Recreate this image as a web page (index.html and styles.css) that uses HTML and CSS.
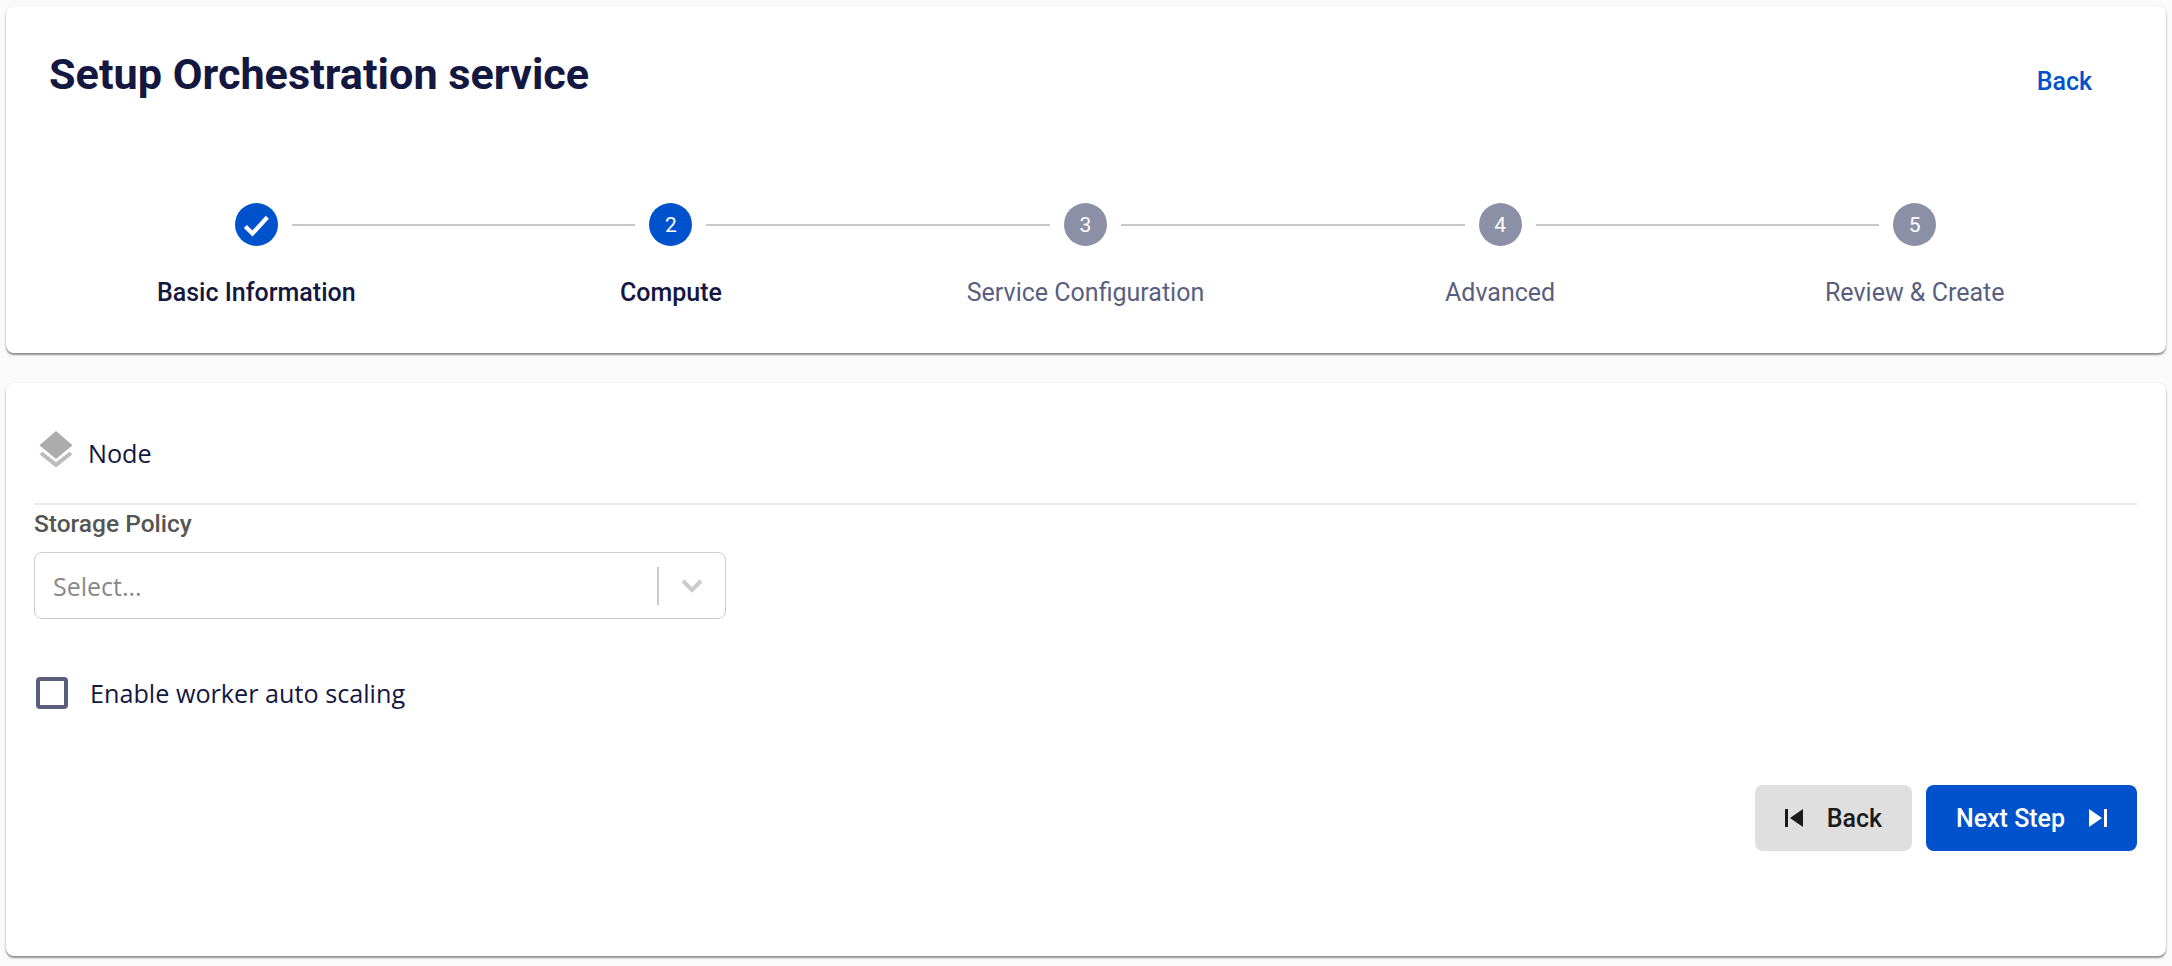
FILE: index.html
```html
<!DOCTYPE html>
<html lang="en">
<head>
<meta charset="utf-8">
<title>Setup Orchestration service</title>
<link rel="stylesheet" href="styles.css">
</head>
<body>
<main class="page">
  <section class="card header-card">
    <div class="header-row">
      <h1 class="title">Setup Orchestration service</h1>
      <a class="back-link" href="#">Back</a>
    </div>
    <ol class="stepper">
      <li class="step done">
        <div class="step-track">
          <span class="bubble active"><svg class="check" viewBox="0 0 24 24"><path d="M4.500 13l5 5L20 6.500" fill="none" stroke="#fff" stroke-width="3"/></svg></span>
          <span class="connector"></span>
        </div>
        <span class="step-label strong">Basic Information</span>
      </li>
      <li class="step">
        <div class="step-track">
          <span class="connector"></span>
          <span class="bubble active">2</span>
          <span class="connector"></span>
        </div>
        <span class="step-label strong">Compute</span>
      </li>
      <li class="step">
        <div class="step-track">
          <span class="connector"></span>
          <span class="bubble">3</span>
          <span class="connector"></span>
        </div>
        <span class="step-label">Service Configuration</span>
      </li>
      <li class="step">
        <div class="step-track">
          <span class="connector"></span>
          <span class="bubble">4</span>
          <span class="connector"></span>
        </div>
        <span class="step-label">Advanced</span>
      </li>
      <li class="step">
        <div class="step-track">
          <span class="connector"></span>
          <span class="bubble">5</span>
        </div>
        <span class="step-label">Review &amp; Create</span>
      </li>
    </ol>
  </section>

  <section class="card form-card">
    <div class="section-head">
      <svg class="layers" viewBox="0 0 34 34" preserveAspectRatio="none"><path d="M17 0L33.500 13.500 17 26.500.5 13.500z" fill="#acacac"/><path d="M3.500 19.500L.5 22 17 34.500 33.500 22l-3-2.500L17 29.500z" fill="#bdbdbd"/></svg>
      <span class="section-title">Node</span>
    </div>
    <label class="field-label">Storage Policy</label>
    <div class="select">
      <span class="placeholder">Select...</span>
      <span class="select-sep"></span>
      <svg class="chevron" viewBox="0 0 22 14"><path d="M2 2l9 9 9-9" fill="none" stroke="#cccccc" stroke-width="4"/></svg>
    </div>
    <label class="check-row">
      <span class="checkbox"></span>
      <span class="check-text">Enable worker auto scaling</span>
    </label>
    <div class="actions">
      <button class="btn btn-back" type="button">
        <svg class="btn-icon" viewBox="0 0 18 18"><path d="M0 0h3v18H0zM18 0v18L5 9z" fill="currentColor"/></svg>
        Back
      </button>
      <button class="btn btn-next" type="button">
        Next Step
        <svg class="btn-icon" viewBox="0 0 18 18"><path d="M15 0h3v18h-3zM0 0v18l13-9z" fill="currentColor"/></svg>
      </button>
    </div>
  </section>
</main>
</body>
</html>
```
FILE: styles.css
```css
* { box-sizing: border-box; }
html, body { margin: 0; height: 100%; }
body {
  background: #fafafa;
  font-family: Roboto, "Liberation Sans", sans-serif;
  color: #14173f;
}
.page {
  display: flex;
  flex-direction: column;
  gap: 30px;
  height: 966px;
  padding: 6px 6px 10px;
}
.card {
  background: #fff;
  border-radius: 8px;
  box-shadow: 0 2px 2px rgba(0, 0, 0, 0.42), 0 0 2px rgba(0, 0, 0, 0.1);
}
.header-card {
  height: 347px;
  padding: 0 44px 0 43px;
}
.header-row {
  display: flex;
  justify-content: space-between;
  align-items: flex-start;
}
.title {
  margin: 44px 0 0 0;
  font-size: 43.200px;
  line-height: 50px;
  font-weight: 700;
  color: #14173f;
}
.back-link {
  margin: 61px 30px 0 0;
  font-size: 25px;
  line-height: 30px;
  font-weight: 500;
  color: #0052cc;
  text-decoration: none;
}
.stepper {
  list-style: none;
  margin: 103px 0 0;
  padding: 0;
  display: grid;
  grid-template-columns: repeat(5, 1fr);
}
.step {
  display: flex;
  flex-direction: column;
  align-items: center;
}
.step-track {
  width: 100%;
  display: flex;
  align-items: center;
  height: 43px;
}
.step.done .step-track { padding-left: calc(50% - 21.500px); }
.step:last-child .step-track { padding-right: calc(50% - 21.500px); }
.connector {
  flex: 1;
  height: 2px;
  background: #c8c8cc;
}
.step .connector:first-child { margin-right: 14px; }
.step .bubble + .connector { margin-left: 14px; }
.bubble {
  flex: none;
  width: 43px;
  height: 43px;
  border-radius: 50%;
  background: #8c90a6;
  color: #fff;
  font-size: 21px;
  display: flex;
  align-items: center;
  justify-content: center;
}
.bubble.active { background: #0052cc; }
.check { width: 34px; height: 34px; }
.step-label {
  margin-top: 35px;
  font-size: 25px;
  line-height: 24px;
  color: #5a5f80;
}
.step-label.strong {
  font-weight: 500;
  color: #14173f;
}
.form-card {
  flex: 1;
  padding: 0 29px 0 28px;
}
.section-head {
  display: flex;
  align-items: center;
  gap: 15px;
  height: 122px;
  padding: 20px 0 0 5px;
  border-bottom: 2px solid #ebebeb;
}
.layers { width: 34px; height: 36px; margin-top: -8px; }
.section-title {
  font-family: "Open Sans", sans-serif;
  font-size: 25.200px;
  line-height: 30px;
  color: #14173f;
}
.field-label {
  display: block;
  margin-top: 5px;
  font-size: 24.500px;
  line-height: 28px;
  font-weight: 500;
  color: #555;
}
.select {
  display: flex;
  align-items: center;
  margin-top: 14px;
  width: 692px;
  height: 67px;
  padding: 0 22px 0 18px;
  border: 1.500px solid #ccc;
  border-radius: 8px;
}
.placeholder {
  flex: 1;
  font-family: "Open Sans", sans-serif;
  font-size: 25px;
  color: #888;
}
.select-sep {
  width: 2px;
  height: 38px;
  background: #ccc;
  margin-right: 22px;
}
.chevron { width: 22px; height: 14px; }
.check-row {
  display: flex;
  align-items: center;
  gap: 22px;
  margin: 58px 0 0 2px;
}
.checkbox {
  width: 32px;
  height: 32px;
  border: 4px solid #5a5f80;
  border-radius: 4px;
}
.check-text {
  font-family: "Open Sans", sans-serif;
  font-size: 25.200px;
  line-height: 32px;
  color: #14173f;
}
.actions {
  display: flex;
  justify-content: flex-end;
  gap: 14px;
  margin-top: 76px;
}
.btn {
  display: flex;
  align-items: center;
  justify-content: center;
  gap: 24px;
  height: 66px;
  border: 0;
  border-radius: 8px;
  font-family: Roboto, sans-serif;
  font-size: 25px;
  font-weight: 500;
}
.btn-back { width: 157px; background: #dfdfdf; color: #1a1a1a; }
.btn-next { width: 211px; background: #0052cc; color: #fff; }
.btn-icon { width: 18px; height: 18px; }
```
